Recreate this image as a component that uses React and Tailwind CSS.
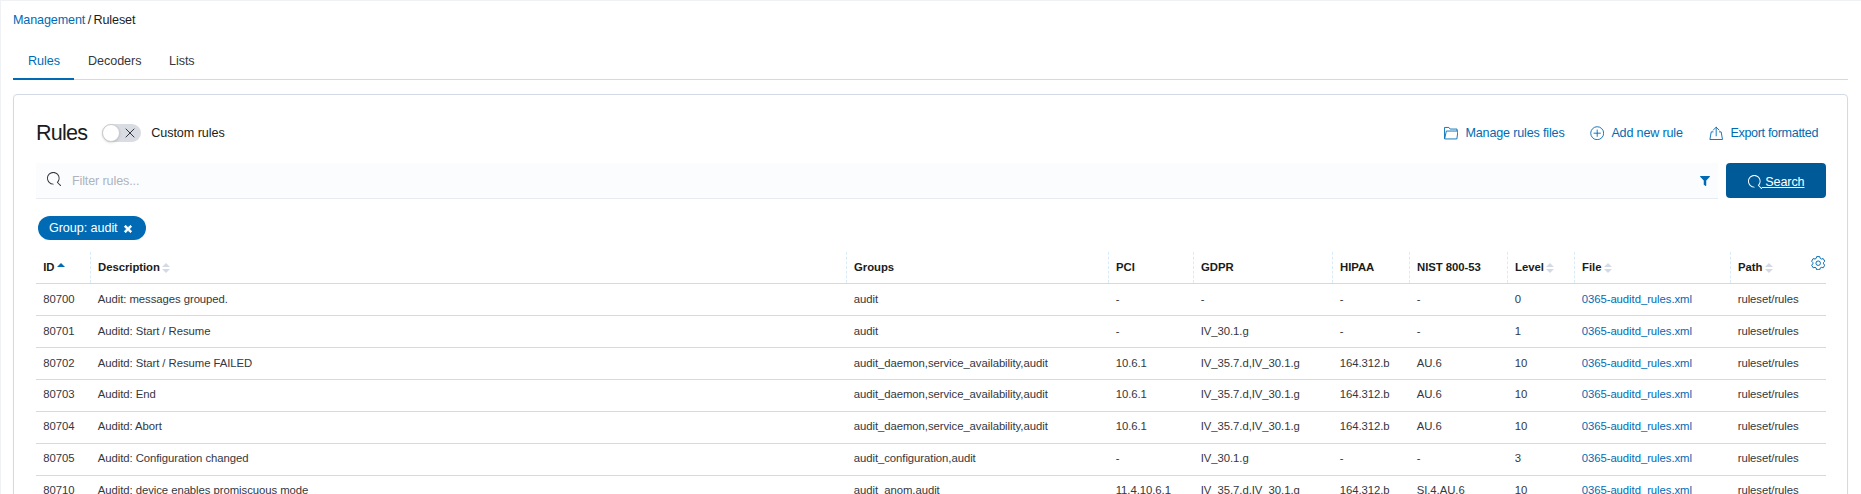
import React from "react";
import { FaFilter, FaTimes } from "react-icons/fa";

const COLS =
  "grid grid-cols-[54.5px_756px_262px_85px_139px_77px_98px_67px_156px_95.5px]";

const HEADERS = [
  ["ID", "asc"],
  ["Description", "both"],
  ["Groups"],
  ["PCI"],
  ["GDPR"],
  ["HIPAA"],
  ["NIST 800-53"],
  ["Level", "both"],
  ["File", "both"],
  ["Path", "both"],
];

const FILE = "0365-auditd_rules.xml";
const PATH = "ruleset/rules";
const DAEMON = "audit_daemon,service_availability,audit";

const ROWS = [
  ["80700", "Audit: messages grouped.", "audit", "-", "-", "-", "-", "0", FILE, PATH],
  ["80701", "Auditd: Start / Resume", "audit", "-", "IV_30.1.g", "-", "-", "1", FILE, PATH],
  ["80702", "Auditd: Start / Resume FAILED", DAEMON, "10.6.1", "IV_35.7.d,IV_30.1.g", "164.312.b", "AU.6", "10", FILE, PATH],
  ["80703", "Auditd: End", DAEMON, "10.6.1", "IV_35.7.d,IV_30.1.g", "164.312.b", "AU.6", "10", FILE, PATH],
  ["80704", "Auditd: Abort", DAEMON, "10.6.1", "IV_35.7.d,IV_30.1.g", "164.312.b", "AU.6", "10", FILE, PATH],
  ["80705", "Auditd: Configuration changed", "audit_configuration,audit", "-", "IV_30.1.g", "-", "-", "3", FILE, PATH],
  ["80710", "Auditd: device enables promiscuous mode", "audit_anom,audit", "11.4,10.6.1", "IV_35.7.d,IV_30.1.g", "164.312.b", "SI.4,AU.6", "10", FILE, PATH],
];

function SearchIcon({ className }) {
  return (
    <svg viewBox="0 0 16 16" fill="currentColor" className={className}>
      <path d="M11.271 11.978l3.872 3.873a.502.502 0 00.708 0 .502.502 0 000-.708l-3.565-3.564c2.38-2.747 2.267-6.923-.342-9.532-2.73-2.73-7.17-2.73-9.898 0-2.728 2.729-2.728 7.17 0 9.9a6.955 6.955 0 004.949 2.05.5.5 0 000-1 5.96 5.96 0 01-4.242-1.757 6.01 6.01 0 010-8.486 6.004 6.004 0 018.484 0 6.01 6.01 0 010 8.486.5.5 0 00-.034.738z" />
    </svg>
  );
}

function FolderIcon() {
  return (
    <svg viewBox="0 0 16 16" fill="none" stroke="currentColor" className="size-[14.4px] shrink-0">
      <path d="M.6 14V1.600h4.800l1.400 1.800h7.700v2.200M.7 14.400L2.600 5.600h12.900L14.300 14.400H.7" strokeLinejoin="round" />
    </svg>
  );
}

function PlusIcon() {
  return (
    <svg viewBox="0 0 16 16" fill="none" stroke="currentColor" className="size-[14.4px] shrink-0">
      <circle cx="8" cy="8" r="7.2" />
      <path d="M8 4v8M4 8h8" />
    </svg>
  );
}

function ExportIcon() {
  return (
    <svg viewBox="0 0 16 16" fill="none" stroke="currentColor" className="size-[14.4px] shrink-0">
      <path d="M4.500 6.500h-2l-1.500 8.500h14l-1.500-8.500h-2M8 11V1.300M4.800 4.500L8 1.300l3.200 3.200" strokeLinejoin="round" strokeLinecap="round" />
    </svg>
  );
}

function GearIcon() {
  return (
    <svg viewBox="0 0 16 16" fill="none" stroke="currentColor" strokeWidth="1.1" strokeLinejoin="round" className="size-[14.4px]">
      <path d="M6.300.7h3.400l.6 2 1.200.7 2.100-.5 1.700 2.900L13.900 7.300v1.400l1.400 1.500-1.700 2.900-2.100-.5-1.200.7-.6 2H6.300l-.6-2-1.200-.7-2.100.5L.700 10.200l1.400-1.500V7.300L.700 5.800l1.700-2.900 2.100.5 1.200-.7z" />
      <circle cx="8" cy="8" r="2.500" />
    </svg>
  );
}

function SortIcon({ dir }) {
  if (dir === "asc") {
    return (
      <svg viewBox="0 0 8 10" className="ml-[3px] h-[10px] w-2 text-[#006bb4]" fill="currentColor">
        <path d="M4 0l4 4H0z" />
      </svg>
    );
  }
  return (
    <svg viewBox="0 0 8 10" className="ml-[2.500px] h-[10px] w-2 text-[#d3dae6]" fill="currentColor">
      <path d="M4 0l4 4H0zM4 10l4-4H0z" />
    </svg>
  );
}

function Action({ icon, label, className }) {
  return (
    <button className={"flex items-center gap-[7.500px] whitespace-nowrap text-[#006bb4] " + className}>
      {icon}
      <span>{label}</span>
    </button>
  );
}

export default function App() {
  return (
    <div className="h-[494px] overflow-hidden border-t border-l border-[#f0f1f4] bg-white pt-[9.500px] pr-[13px] pl-[12px] font-['Liberation_Sans',Arial,sans-serif] text-[12.6px] leading-[19px] tracking-[-0.063px] text-[#343741]">
      <div className="tracking-[-0.130px] [word-spacing:-0.900px] text-[#1a1c21]">
        <span className="text-[#006bb4]">Management</span> / Ruleset
      </div>

      <div className="mt-[13.500px] flex h-[37px] border-b border-[#d3dae6]">
        <div className="h-[37px] w-[61px] border-b-2 border-[#006bb4] pt-[8.500px] pl-[15px] text-[#006bb4]">Rules</div>
        <div className="w-[81px] pt-[8.500px] pl-[14px]">Decoders</div>
        <div className="pt-[8.500px] pl-[14px]">Lists</div>
      </div>

      <div className="mt-[14px] h-[600px] rounded-[4px] border border-[#d3dae6] pt-[22px] pr-[21px] pl-[22px] shadow-[0_2px_2px_-1px_rgba(152,162,179,0.3)]">
        <div className="flex h-8 items-center">
          <h1 className="-mt-px text-[21.6px] leading-8 tracking-[-0.8px] text-[#1a1c21]">Rules</h1>
          <div className="ml-[15px] flex h-[18px] w-[39px] items-center rounded-full bg-[#d9dce3]">
            <div className="size-[18px] rounded-full border border-[#c9cbcd] bg-white shadow-sm" />
            <svg viewBox="0 0 10 10" className="ml-[5px] size-[10px] text-[#343741]" stroke="currentColor">
              <path d="M.7.700l8.600 8.600M9.300.7L.7 9.300" />
            </svg>
          </div>
          <span className="ml-[10px] text-[#1a1c21]">Custom rules</span>
          <div className="mr-[8px] ml-auto flex gap-[24px]">
            <Action icon={<FolderIcon />} label="Manage rules files" className="w-[122px] tracking-[-0.170px]" />
            <Action icon={<PlusIcon />} label="Add new rule" className="w-[95px] tracking-[-0.180px]" />
            <Action icon={<ExportIcon />} label="Export formatted" className="w-[109.500px] tracking-[-0.340px]" />
          </div>
        </div>

        <div className="mt-[14px] flex">
          <div className="flex h-9 w-[1682px] items-center border-b border-[#e8ebf1] bg-[#fbfcfd] pl-[11px]">
            <SearchIcon className="mb-[3px] size-[14.4px] text-[#343741]" />
            <span className="mt-px ml-[10.500px] tracking-[-0.120px] text-[#adb4c0]">Filter rules...</span>
            <FaFilter className="mr-[8px] ml-auto size-[10px] text-[#006bb4]" />
          </div>
          <button className="ml-2 flex h-[35px] w-[100px] items-center justify-center rounded-[4px] bg-[#005a98] pt-[3px] text-white underline">
            <SearchIcon className="size-[14.4px]" />
            <span className="tracking-[-0.120px] whitespace-pre"> Search</span>
          </button>
        </div>

        <div className="mt-[17px] ml-[2px] flex h-6 w-[108px] items-center rounded-full bg-[#006bb4] pt-px pl-[11px] text-white">
          <span>Group: audit</span>
          <FaTimes className="ml-[5px] size-[10px]" stroke="currentColor" strokeWidth="50" />
        </div>

        <div className="relative mt-[12px] text-[11.34px] leading-[17px] tracking-[-0.057px]">
          <div className={COLS + " h-[32px] border-b border-[#d3dae6] font-bold text-[#1a1c21]"}>
            {HEADERS.map(([label, sort], i) => (
              <div
                key={label}
                className={
                  "flex items-center " +
                  (i < 1 ? "pl-[7.200px]" : "-ml-[0.600px] border-l border-dashed border-[#d9ecf7] pl-[7.200px]")
                }
              >
                {label}
                {sort && <SortIcon dir={sort} />}
              </div>
            ))}
          </div>
          <div className="absolute top-[4px] right-px text-[#006bb4]">
            <GearIcon />
          </div>
          {ROWS.map((row, r) => (
            <div
              key={row[0]}
              className={COLS + " h-[32px] border-b border-[#d3dae6] " + (r < 3 ? "pt-[7.400px]" : "pt-[6.400px]")}
            >
              {row.map((cell, i) => (
                <div key={i} className={"pl-[7.200px] " + (i === 8 ? "text-[#006bb4]" : "")}>
                  {cell}
                </div>
              ))}
            </div>
          ))}
        </div>
      </div>
    </div>
  );
}
